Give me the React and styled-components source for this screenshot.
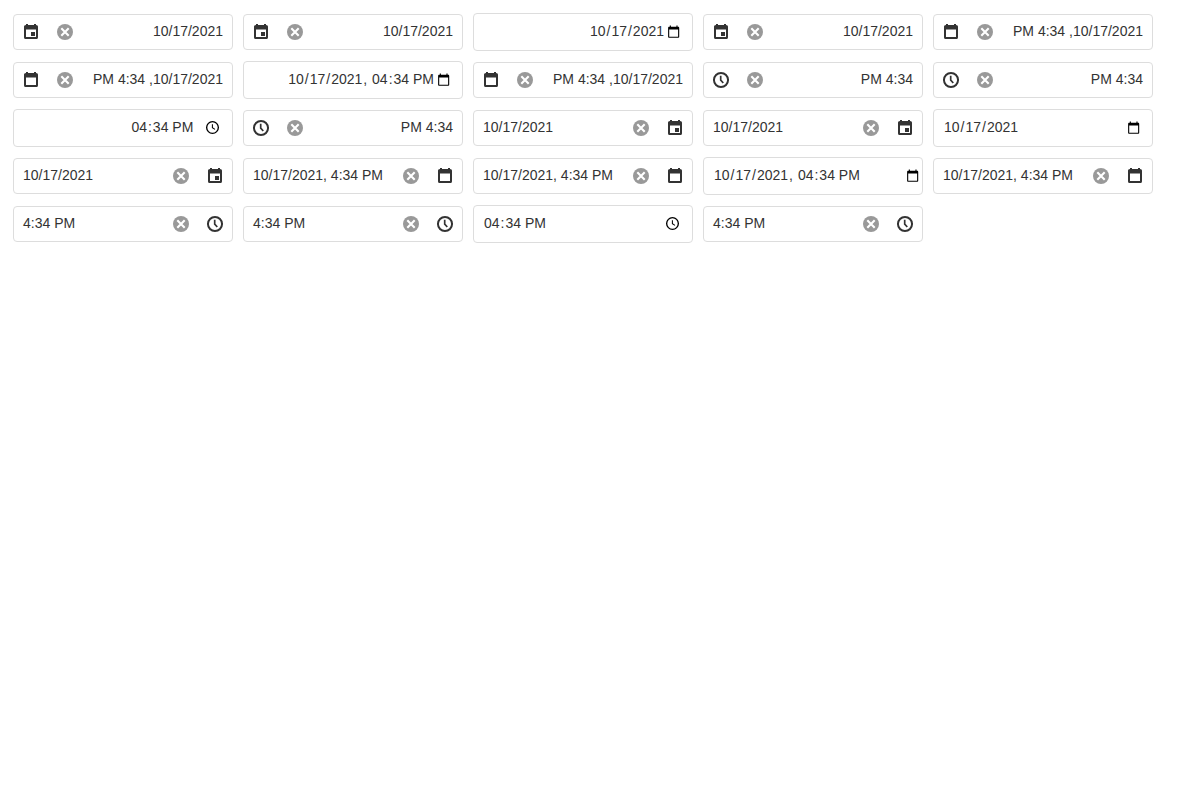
import React from "react";
import styled, { createGlobalStyle } from "styled-components";

const GlobalStyle = createGlobalStyle`
  body {
    margin: 0;
    background: #fff;
    color: #333;
    font: 14px/18px "Liberation Sans", Arial, sans-serif;
  }
`;

const Gallery = styled.main`
  display: grid;
  grid-template-columns: repeat(5, 220px);
  grid-auto-rows: 38px;
  gap: 10px;
  align-items: center;
  padding: 13px;
`;

const Box = styled.div`
  display: flex;
  align-items: center;
  box-sizing: border-box;
  height: 36px;
  border: 1px solid #ddd;
  border-radius: 4px;
  overflow: hidden;
  flex-direction: ${(p) => (p.$rtl ? "row-reverse" : "row")};
`;

const NativeBox = styled(Box)`
  height: 38px;
  padding-left: 9px;
  padding-right: ${(p) => p.$end}px;
  flex-direction: row;
  justify-content: ${(p) => (p.$rtl ? "flex-end" : "space-between")};
`;

const Value = styled.span`
  flex: 1;
  padding: 0 9px 2px;
  white-space: pre;
  text-align: ${(p) => (p.$rtl ? "right" : "left")};
`;

const Button = styled.span`
  display: flex;
  align-items: center;
  justify-content: center;
  width: 34px;
  height: 34px;
`;

const Fields = styled.span`
  display: flex;
  flex: none;
  padding-bottom: 2px;
  margin-right: ${(p) => p.$gap}px;
  white-space: pre;
`;

const Field = styled.span`
  padding: 0 1px;
`;

const Icon = styled.svg`
  display: block;
  flex: none;
  fill: ${(p) => p.$color || "#333"};
`;

const PickerIcon = styled(Icon)`
  margin-bottom: 1px;
`;

const EventIcon = () => (
  <Icon width="18" height="18" viewBox="0 0 18 18">
    <path
      fillRule="evenodd"
      d="M4 1h2v1h6V1h2v1c1.300 0 2 .7 2 1.900v10.300c0 1.200-.7 1.900-1.900 1.900H3.900C2.700 16.100 2 15.400 2 14.200V3.900C2 2.700 2.700 2 4 2zM4 6.600v7.500h10V6.600zM9 9h4v4H9z"
    />
  </Icon>
);

const CalendarIcon = () => (
  <Icon width="18" height="18" viewBox="0 0 18 18">
    <path
      fillRule="evenodd"
      d="M4 1h2v1h6V1h2v1c1.300 0 2 .7 2 1.900v10.300c0 1.200-.7 1.900-1.900 1.900H3.900C2.700 16.100 2 15.400 2 14.200V3.900C2 2.700 2.700 2 4 2zM4 6.600v7.500h10V6.600z"
    />
  </Icon>
);

const ClockIcon = () => (
  <Icon width="18" height="18" viewBox="0 0 18 18">
    <circle cx="9" cy="9" r="7.050" fill="none" stroke="#333" strokeWidth="2" />
    <path d="M8.700 4.800V9.200L11.300 12" fill="none" stroke="#333" strokeWidth="1.700" />
  </Icon>
);

const ClearIcon = () => (
  <Icon width="18" height="18" viewBox="0 0 18 18" $color="#999">
    <circle cx="9" cy="9" r="8" />
    <path d="M5.300 5.300l7.400 7.400M12.700 5.300l-7.400 7.400" stroke="#fff" strokeWidth="2.100" />
  </Icon>
);

const NativeCalendarIcon = () => (
  <PickerIcon width="13.333" height="13.333" viewBox="0 0 24 24" $color="#000">
    <path d="M20 3h-1V1h-2v2H7V1H5v2H4c-1.100 0-2 .9-2 2v16c0 1.100.9 2 2 2h16c1.100 0 2-.9 2-2V5c0-1.100-.9-2-2-2zm0 18H4V8h16v13z" />
  </PickerIcon>
);

const NativeClockIcon = () => (
  <PickerIcon width="15" height="15" viewBox="0 0 15 15" $color="#000">
    <circle cx="7.500" cy="7.500" r="5.850" fill="none" stroke="#000" strokeWidth="1.350" />
    <path d="M7.400 4.200V7.700L10 9.400" fill="none" stroke="#000" strokeWidth="1.050" />
  </PickerIcon>
);

const icons = { event: EventIcon, calendar: CalendarIcon, clock: ClockIcon };

function DateBox({ text, icon, rtl }) {
  const Glyph = icons[icon];
  return (
    <Box $rtl={rtl}>
      <Value $rtl={rtl}>{text}</Value>
      <Button><ClearIcon /></Button>
      <Button><Glyph /></Button>
    </Box>
  );
}

const DATE = ["10", "/", "17", "/", "2021"];
const TIME = ["04", ":", "34 PM"];
const nativeParts = { date: DATE, time: TIME, datetime: [...DATE, ", ", ...TIME] };

function NativeDateBox({ type, rtl, end, gap = 0 }) {
  return (
    <NativeBox $rtl={rtl} $end={end}>
      <Fields $gap={gap}>
        {nativeParts[type].map((part, i) =>
          /\w/.test(part) ? <Field key={i}>{part}</Field> : <span key={i}>{part}</span>
        )}
      </Fields>
      {type === "time" ? <NativeClockIcon /> : <NativeCalendarIcon />}
    </NativeBox>
  );
}

export default function App() {
  return (
    <>
      <GlobalStyle />
      <Gallery>
        <DateBox rtl text="10/17/2021" icon="event" />
        <DateBox rtl text="10/17/2021" icon="event" />
        <NativeDateBox rtl type="date" end={11.667} gap={2} />
        <DateBox rtl text="10/17/2021" icon="event" />
        <DateBox rtl text="PM 4:34 ,10/17/2021" icon="calendar" />

        <DateBox rtl text="PM 4:34 ,10/17/2021" icon="calendar" />
        <NativeDateBox rtl type="datetime" end={11.667} gap={2} />
        <DateBox rtl text="PM 4:34 ,10/17/2021" icon="calendar" />
        <DateBox rtl text="PM 4:34" icon="clock" />
        <DateBox rtl text="PM 4:34" icon="clock" />

        <NativeDateBox rtl type="time" end={12} gap={10.7} />
        <DateBox rtl text="PM 4:34" icon="clock" />
        <DateBox text="10/17/2021" icon="event" />
        <DateBox text="10/17/2021" icon="event" />
        <NativeDateBox type="date" end={11.667} />

        <DateBox text="10/17/2021" icon="event" />
        <DateBox text="10/17/2021, 4:34 PM" icon="calendar" />
        <DateBox text="10/17/2021, 4:34 PM" icon="calendar" />
        <NativeDateBox type="datetime" end={2.667} />
        <DateBox text="10/17/2021, 4:34 PM" icon="calendar" />

        <DateBox text="4:34 PM" icon="clock" />
        <DateBox text="4:34 PM" icon="clock" />
        <NativeDateBox type="time" end={12} />
        <DateBox text="4:34 PM" icon="clock" />
      </Gallery>
    </>
  );
}
